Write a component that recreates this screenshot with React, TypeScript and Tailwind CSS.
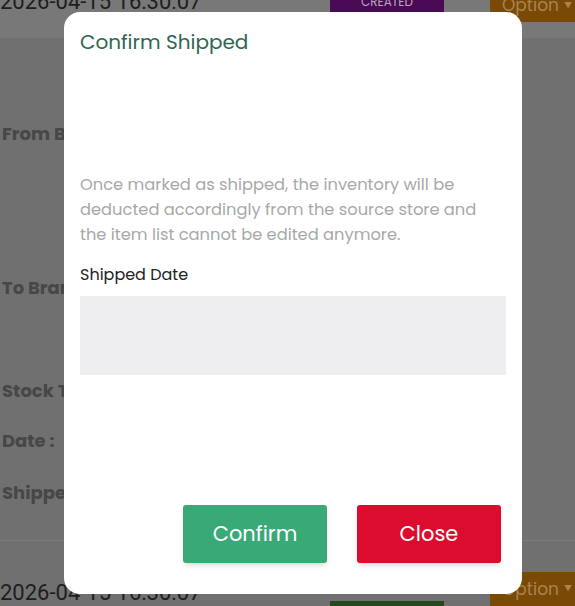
import React from "react";

const FONT = { fontFamily: "Poppins, Inter, 'Open Sans', sans-serif" };

function BackgroundPage() {
  return (
    <div className="flex h-[606px] w-[575px] flex-col overflow-hidden bg-[#707070]" style={FONT}>
      {/* top row, mostly scrolled out of view */}
      <div className="flex h-[37px] items-start bg-[#787878]">
        <div className="-mt-[15px] w-[330px] shrink-0 text-[22px] text-[#1e1e1e]" style={{ fontFamily: "Roboto, sans-serif" }}>
          2026-04-15 16:30:07
        </div>
        <div className="-mt-[8px] flex h-[20px] w-[114px] shrink-0 items-center justify-center bg-[#4a0a55] text-[12px] text-[#b9a6bd]">
          CREATED
        </div>
        <div className="ml-[46px] -mt-[10px] flex h-[32px] min-w-0 flex-1 items-center gap-[5px] bg-[#7a4906] pl-[12px] text-[17px] text-[#a88450]">
          Option <span className="text-[8px]">▼</span>
        </div>
      </div>

      <div className="flex flex-1 flex-col border-t border-[#7a7a7a] pl-[2px] text-[18px] font-bold text-[#474747]">
        <div className="mt-[82px]">From Branch :</div>
        <div className="mt-[127px]">To Branch :</div>
        <div className="mt-[76px]">Stock Transfer No :</div>
        <div className="mt-[23px]">Date :</div>
        <div className="mt-[25px]">Shipped Date :</div>
      </div>

      <div className="flex h-[66px] items-start border-t border-[#7c7c7c]">
        <div className="mt-[35px] w-[330px] shrink-0 text-[22px] text-[#1e1e1e]" style={{ fontFamily: "Roboto, sans-serif" }}>
          2026-04-15 16:30:07
        </div>
        <div className="mt-[60px] flex h-[30px] w-[114px] shrink-0 items-start justify-center bg-[#23491f] pt-[3px] text-[12px] text-[#6f8a6a]">
          Completed
        </div>
        <div className="ml-[46px] mt-[31px] flex h-[40px] min-w-0 flex-1 items-start gap-[5px] bg-[#7a4906] pl-[12px] pt-[5px] text-[17px] text-[#a88450]">
          Option <span className="mt-[6px] text-[8px]">▼</span>
        </div>
      </div>
    </div>
  );
}

function ConfirmShippedModal() {
  return (
    <div
      className="absolute left-[64px] top-[12px] flex h-[582px] w-[458px] flex-col rounded-[16px] bg-white px-[16px] pt-[16px]"
      style={FONT}
    >
      <h2 className="text-[20px] leading-[28px] text-[#2f6652]">Confirm Shipped</h2>

      <p className="mt-[116px] text-[16.3px] leading-[25px] text-[#a8a8a8]">
        Once marked as shipped, the inventory will be deducted accordingly from the source store and the item list cannot be edited anymore.
      </p>

      <label className="mt-[16px] text-[16px] leading-[24px] text-[#222]">Shipped Date</label>
      <div className="mt-[9px] h-[79px] bg-[#eeeef0]" />

      <div className="mt-[130px] flex justify-end gap-[30px] pr-[5px]">
        <button className="h-[58px] w-[144px] rounded-[3px] bg-[#3aa978] text-[21px] text-white shadow-md">Confirm</button>
        <button className="h-[58px] w-[144px] rounded-[3px] bg-[#dc0c2e] text-[21px] text-white shadow-md">Close</button>
      </div>
    </div>
  );
}

export default function App() {
  return (
    <div className="relative h-[606px] w-[575px] overflow-hidden">
      <BackgroundPage />
      <ConfirmShippedModal />
    </div>
  );
}
